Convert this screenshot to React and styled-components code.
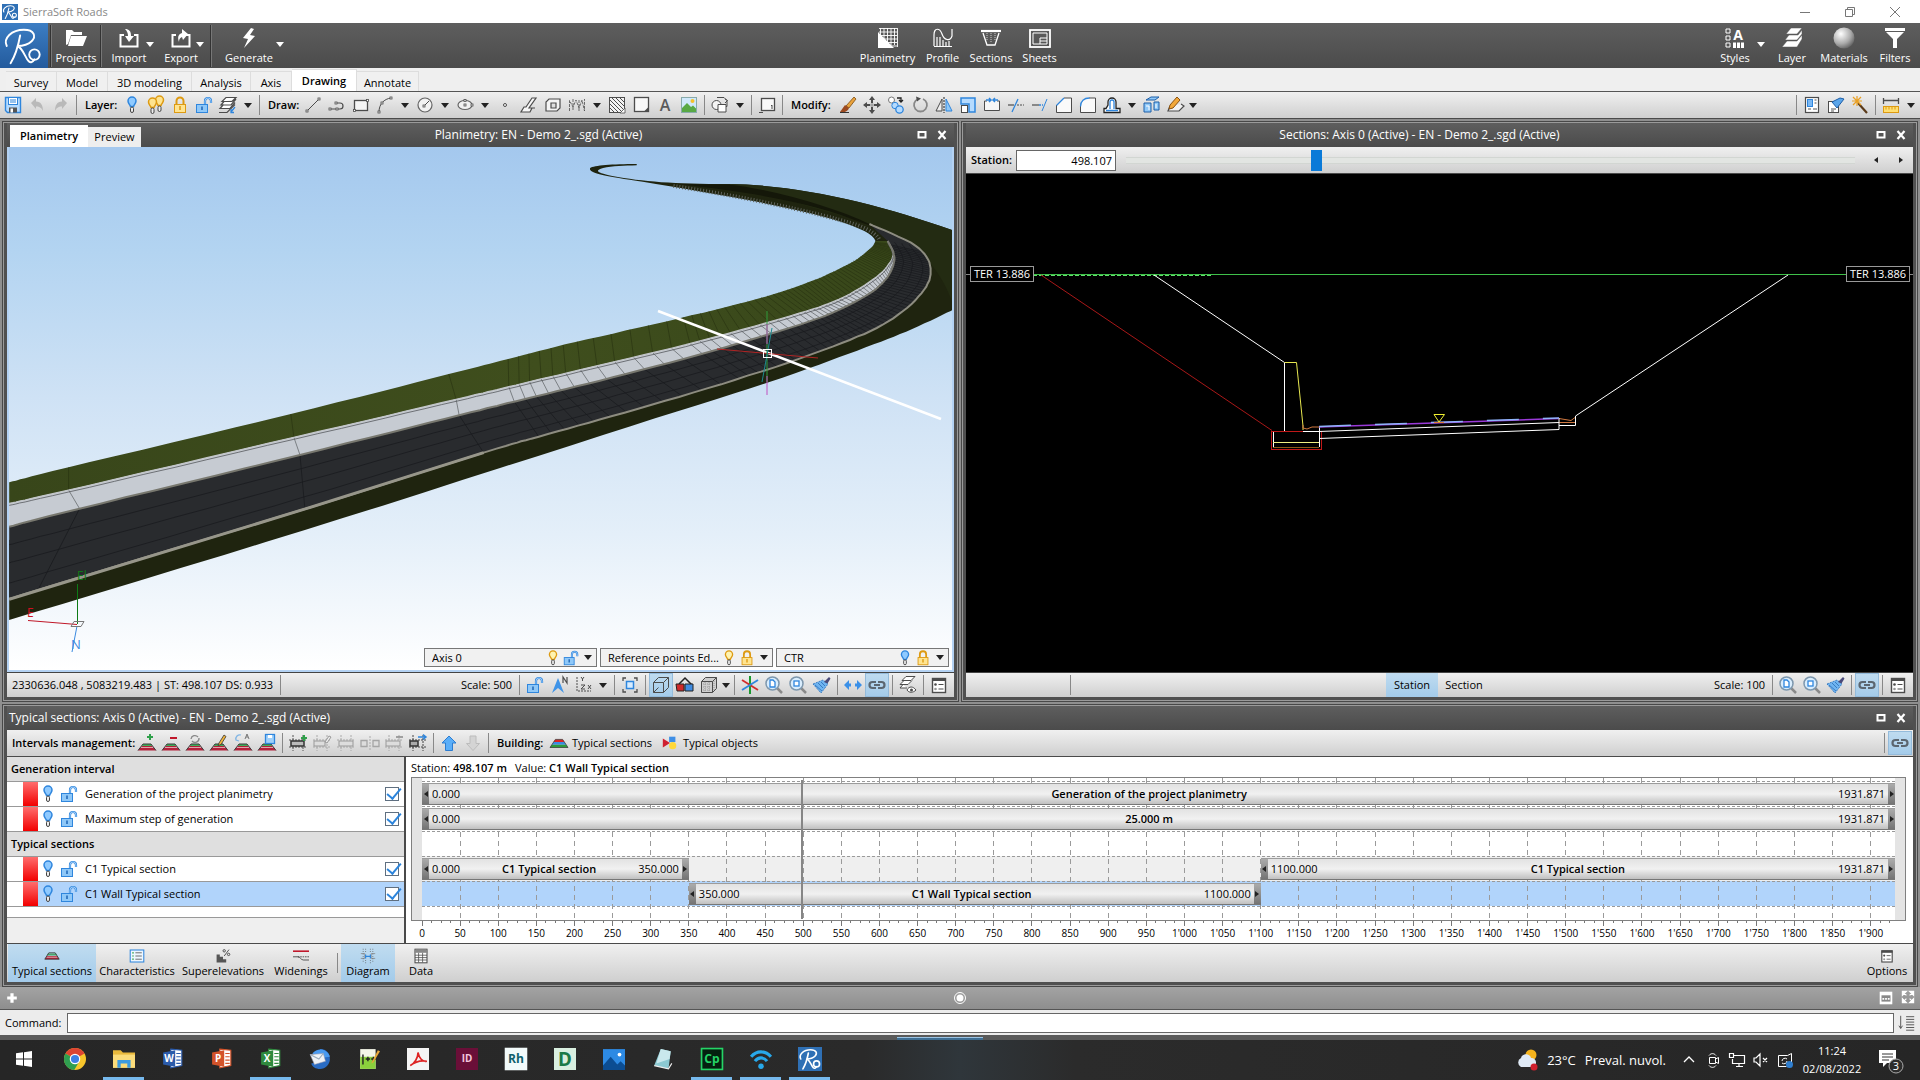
import React, { useState } from 'react';
import styled, { createGlobalStyle, css } from 'styled-components';

const GlobalStyle = createGlobalStyle`
  * {
    box-sizing: border-box;
  }

  body {
    margin: 0;
    background: #8f8f8f;
    color: #000;
    font-family: 'Open Sans', 'Noto Sans', sans-serif;
    font-size: 11px;
    line-height: 16px;
  }

  b {
    font-weight: 600;
  }

  button, input, select {
    font: inherit;
    color: inherit;
    border-radius: 0;
  }

  button {
    padding: 0;
    border: 0;
    background: none;
    cursor: pointer;
  }
`;

const bar = 'linear-gradient(#f0f0f0, #cfcfcf)';
const darkBar = 'linear-gradient(#5e5e5e, #4b4b4b)';
const activeBlue = 'linear-gradient(#c0dcf0, #a3cbea)';

/* ---------- icons ---------- */

const G = '#4c4c4c';
const B = '#2f86dd';
const LB = '#b5dbff';
const Y = '#dd9a12';
const LY = '#ffe48f';

const bulb = (c, f) => (
  <>
    <path d="M10 2a4 4 0 0 0-4 4c0 2.500 2 3.500 2.500 5.500h3c.5-2 2.500-3 2.500-5.500a4 4 0 0 0-4-4z" fill={f} stroke={c} strokeWidth="1.500" />
    <rect x="8.500" y="12" width="3" height="5.500" rx="1.500" fill="#eee" stroke="#444" />
  </>
);

const lock = (
  <>
    <path d="M6.500 10V6a3.500 3.500 0 0 1 7 0v4" fill="none" stroke={Y} strokeWidth="2" />
    <rect x="4.500" y="9.500" width="11" height="8" fill={LY} stroke={Y} />
    <path d="M10 11v4" stroke={Y} strokeWidth="1.500" />
  </>
);

const unlock = (
  <>
    <path d="M11 10V6a3 3 0 0 1 6 0v2" fill="none" stroke={B} strokeWidth="2.200" />
    <path d="M11 10V6a3 3 0 0 1 6 0v2" fill="none" stroke={LB} strokeWidth=".8" />
    <rect x="2.500" y="9.500" width="11" height="8" fill="#8fc8f8" stroke={B} />
    <path d="M8 11.500v3.500" stroke="#1c64b4" strokeWidth="1.500" />
  </>
);

const hill = (
  <>
    <path d="M6 11h8l1 2H5z" fill="#3fae5a" />
    <path d="M5 13h10l4 4.500H1z" fill="#b3203a" />
    <path d="M4 14.500h12" stroke="#e8c8c8" strokeWidth=".8" />
    <path d="M1 17.500l5-6.500h8l5 6.500" fill="none" stroke="#3a3a3a" />
  </>
);

const lanes = (c) => (
  <path d="M1 7h18M1 14h18M5 2v16M15 2v16" fill="none" stroke={c} strokeDasharray="2 1" />
);

const lens = (inner) => (
  <>
    <path d="M12.500 12.500l5.500 5.500" stroke="#8a8a8a" strokeWidth="2.500" />
    <circle cx="8.500" cy="8.500" r="6.500" fill="#d9edfd" stroke="#7d97ad" strokeWidth="1.500" />
    {inner}
  </>
);

const handle = (x, y) => <rect x={x - 1} y={y - 1} width="2" height="2" fill="#fff" stroke={G} strokeWidth=".8" />;

const ICONS = {
  save: (
    <>
      <path d="M2.500 2.500h15v15h-13l-2-2z" fill={LB} stroke={B} strokeWidth="1.400" />
      <rect x="5.500" y="2.500" width="9" height="7" fill="#fff" stroke={B} />
      <path d="M7 5h6M7 7h6" stroke={B} />
      <rect x="6" y="12.500" width="8" height="5" fill="#555" />
      <rect x="7.500" y="13.500" width="2.500" height="4" fill="#fff" />
    </>
  ),
  undo: <path d="M4 8l5-5v3.500c5 0 7 4 7 9.500-1.500-3-3-4.500-7-4.500V14z" fill="#b9b9b9" />,
  redo: <path d="M16 8l-5-5v3.500c-5 0-7 4-7 9.500 1.500-3 3-4.500 7-4.500V14z" fill="#b9b9b9" />,
  bulb: bulb(B, '#8fcaff'),
  bulbOn: bulb(Y, '#fff3b0'),
  bulbs: (
    <>
      <g transform="translate(3.500 -1)">{bulb(Y, LY)}</g>
      <g transform="translate(-3.500 1)">{bulb(Y, LY)}</g>
    </>
  ),
  lock,
  unlock,
  layers: (
    <>
      <path d="M8 2.500h10l-4 4H4zM6 6.500l-3 3.500h10l5-6M5.500 9.500L2 13.500h10l5-6" fill="#fff" stroke={G} strokeWidth="1.200" />
      <path d="M1 17.500h8l8-8" fill="none" stroke={G} strokeWidth="1.200" />
      <path d="M17 12l-4 5m0-3v3.500h3" fill="none" stroke={B} strokeWidth="1.300" />
    </>
  ),
  line: <><path d="M4 16L16 4" stroke={G} />{handle(4, 16)}{handle(16, 4)}</>,
  polyline: <><path d="M3 14h10c4 0 4-6 0-6H9" fill="none" stroke={G} strokeWidth="1.200" />{handle(3, 14)}{handle(10, 14)}{handle(9, 8)}</>,
  rect: <><rect x="3.500" y="5.500" width="13" height="10" fill="#f4f4f4" stroke={G} strokeWidth="1.300" />{handle(3.5, 15.5)}{handle(16.5, 5.5)}</>,
  arc: <><path d="M4 17C4 9 9 4 16 3" fill="none" stroke={G} />{handle(4, 17)}{handle(7, 8)}{handle(16, 3)}</>,
  circle: <><circle cx="10" cy="10" r="7" fill="#f2f2f2" stroke="#666" strokeWidth="1.200" /><path d="M9 11l5-5" stroke={G} />{handle(9, 11)}</>,
  ellipse: <><ellipse cx="10" cy="10" rx="7" ry="4.500" fill="#f2f2f2" stroke="#666" strokeWidth="1.200" />{handle(10, 10)}{handle(10, 5.5)}{handle(17, 10)}</>,
  point: <circle cx="10" cy="10" r="1.500" fill="#fff" stroke={G} />,
  path3d: <path d="M2 17h9l2-4h-3l7-10h-4L7 12H5zM13 13h3" fill="#f7f7f7" stroke={G} strokeWidth="1.200" />,
  region: <path d="M3 16V7l3-3h11v9l-3 3zM8 13V8h5v5z" fill="#f4f4f4" fillRule="evenodd" stroke={G} strokeWidth="1.200" />,
  spline: <path d="M2.500 16V5.500L6 12l3-7 3 8 3-8 2.500 11V4M6 4v12M12 5v11" fill="none" stroke={G} strokeWidth=".8" strokeDasharray="3 1" />,
  hatch: (
    <>
      <rect x="2.500" y="2.500" width="15" height="15" fill="#f2f2f2" stroke={G} />
      <path d="M3 5l12 12M3 9l8 8M3 13l4 4M5 3l12 12M9 3l8 8M13 3l4 4" stroke={G} />
      <path d="M13 18h5v-5z" fill="#fff" stroke={G} strokeWidth=".8" />
    </>
  ),
  boundary: <><rect x="3.500" y="2.500" width="14" height="14" fill="#f8f8f8" stroke={G} strokeWidth="1.300" /><path d="M13 16.500h4.500V12z" fill={G} /></>,
  letter: <text x="10" y="16" textAnchor="middle" fontSize="16" fontWeight="600" fill="#5a5a5a">A</text>,
  picture: (
    <>
      <rect x="2.500" y="2.500" width="15" height="15" fill="#cfe8fb" stroke="#8aa" />
      <path d="M3 17v-4l5-5 4 4 2-1.500 3 3V17z" fill="#58a945" />
      <circle cx="13.500" cy="6" r="2" fill="#f5c22c" />
    </>
  ),
  shapes: (
    <>
      <path d="M7 2.500h7l3 3v6h-3" fill="none" stroke={G} />
      <circle cx="6.500" cy="10" r="4.500" fill="#f4f4f4" stroke={G} />
      <path d="M8 9.500h8v7.500H8z" fill="#fff" stroke={G} />
      <path d="M15 4l2.500 1.500L15 8" fill="none" stroke={G} />
    </>
  ),
  paper: <><rect x="4.500" y="3.500" width="13" height="12" fill="#f8f8f8" stroke={G} strokeWidth="1.300" /><path d="M2 17.500h4M14 11l1-1v4" fill="none" stroke={G} /></>,
  brush: <><path d="M16 2l2 2-7 9-3-2z" fill="#e9a23b" stroke="#7a4a12" strokeWidth=".8" /><path d="M2 17l5-7 4 3c-1 3-4 5-9 4z" fill="#9b4a20" /><path d="M2 17.500h9" stroke="#333" /></>,
  move: <><path d="M10 1l3 4h-2v3H9V5H7zM10 19l-3-4h2v-3h2v3h2zM1 10l4-3v2h3v2H5v2zM19 10l-4 3v-2h-3V9h3V7z" fill={G} /><rect x="9" y="9" width="2" height="2" fill="#fff" stroke={G} strokeWidth=".6" /></>,
  copy: (
    <>
      <circle cx="5.500" cy="5" r="3" fill="#fff" stroke="#777" />
      <circle cx="9" cy="10.500" r="3.200" fill={LB} stroke={B} />
      <circle cx="13.500" cy="14.500" r="3.700" fill={LB} stroke={B} strokeWidth="1.300" />
      <path d="M11 3h4v4m-2-2l2 2 2-2" fill="none" stroke="#222" strokeWidth="1.300" />
    </>
  ),
  rotate: <><path d="M8 4a6.500 6.500 0 1 0 5 0" fill="none" stroke="#888" strokeWidth="1.800" /><path d="M6 1.500l5 2-4 3z" fill={G} /></>,
  mirror: <><path d="M8 4v12H2z" fill="#eee" stroke={G} /><path d="M12 4v12h6z" fill="#8fc8f8" stroke={B} /><path d="M10 2v16" stroke="#222" strokeDasharray="2 1" /></>,
  scale: <><path d="M3 3h14v14h-6V9H3z" fill={LB} stroke={B} strokeWidth="1.500" /><rect x="3.500" y="10.500" width="6" height="7" fill="#fff" stroke={G} /></>,
  stretch: <><path d="M5 6H2.500v9.500h15V6H15" fill="#f6f6f6" stroke={G} /><path d="M4 5h5M11 5h5M7 3l2 2-2 2M13 3l-2 2 2 2" fill="none" stroke={B} strokeWidth="1.500" /></>,
  trim: <><path d="M2 10h6" stroke={G} strokeWidth="1.200" /><path d="M6 17L12 4" stroke={B} strokeWidth="1.300" /><path d="M11 10h7" stroke={G} strokeDasharray="2 1" /></>,
  extend: <><path d="M2 10h7" stroke={G} strokeWidth="1.200" /><path d="M9 10h4" stroke={B} strokeDasharray="2 1" strokeWidth="1.300" /><path d="M12 16l5-12" stroke={B} /></>,
  chamfer: <><path d="M3 10l7-7h7v14H3z" fill="#fafafa" /><path d="M10 3h7.500v14.500H2.500V10" fill="none" stroke={G} /><path d="M2.500 10.500L10 3" stroke={B} strokeWidth="1.300" /></>,
  fillet: <><path d="M3 11c0-5 3-8 8-8h6v14H3z" fill="#fafafa" /><path d="M11 3h6.500v14.500H2.500V11" fill="none" stroke={G} /><path d="M2.500 11.500C2.500 6 6 3 11.500 3" fill="none" stroke={B} strokeWidth="1.300" /></>,
  offset: <><path d="M2 17.500h16v-4h-4V7a4 4 0 0 0-8 0v3L4 13.500H2z" fill="#fff" stroke="#222" strokeWidth="1.300" /><path d="M4 15.500h12M8 14V7a2 2 0 0 1 4 0v7" fill="none" stroke={B} strokeWidth="1.300" /></>,
  explode: <><path d="M2 8h7v9H2zM12 7h5v8h-5zM4 5l5-3h8l-4 3z" fill="#8fc8f8" stroke="#1d5ea8" /><path d="M4 11h3v4M14 9v4" fill="none" stroke="#fff" /></>,
  editShape: <><path d="M4 11l-2 5h11l5-5-3-2" fill="#f2f2f2" stroke={G} strokeWidth="1.200" /><path d="M4 10l7-8 3 3-7 8-4 1z" fill="#f2a83a" stroke="#8a5210" /></>,
  propA: <><rect x="3.500" y="2.500" width="13" height="15" fill="#fff" stroke={G} strokeWidth="1.200" /><rect x="5.500" y="4.500" width="5" height="7" fill="#7ab8f4" stroke={B} /><path d="M12.500 5h2M12.500 8h2M6 14h3M11 14h4" stroke="#555" /></>,
  propB: <><rect x="2.500" y="6.500" width="10" height="11" fill="#fff" stroke={G} /><path d="M5 14h5M5 16h3" stroke="#555" /><path d="M6 7l8-4 4 1-7 9z" fill="#5aa5ea" stroke="#1d5ea8" /></>,
  wand: <><path d="M8 8l9 10" stroke="#5a3a1a" strokeWidth="2.200" /><path d="M7 1v10M2 6h10M3 2l8 8M11 2l-8 8" stroke="#eaa022" strokeWidth="1.200" /></>,
  ruler: <><path d="M2.500 3v6M17.500 3v6M2.500 5.500h15" stroke={G} strokeWidth="1.300" /><rect x="2.500" y="11.500" width="15" height="6" fill="#ffdf70" stroke={Y} /><path d="M5 12v2.500M8 12v2.500M11 12v2.500M14 12v2.500" stroke={Y} /></>,
  north: <><path d="M3 18L9 3l6 15-6-5z" fill="#3f94e8" /><path d="M14 8V2l4 6V2" fill="none" stroke={G} strokeWidth="1.200" /></>,
  axes: <><path d="M4 2v14h14" fill="none" stroke={G} strokeDasharray="2 1" /><path d="M8 2l1.500 2L11 2M9.500 4v2M8 10h4l-4 4h4M15 10l3 4M18 10l-3 4" fill="none" stroke={G} /></>,
  fit: <><rect x="6.500" y="6.500" width="7" height="7" fill="#d7ecff" stroke={B} strokeWidth="1.500" /><path d="M3 6V3h3M14 3h3v3M17 14v3h-3M6 17H3v-3" fill="none" stroke={G} strokeWidth="1.300" /></>,
  wire: <path d="M2.500 7.500h10v10h-10zM2.500 7.500l5-5h10l-5 5M17.500 2.500v10l-5 5M2.500 17.500l5-5" fill="none" stroke={G} />,
  glasses: <><path d="M4 9l6-6 7 7" fill="none" stroke="#222" strokeWidth="1.500" /><path d="M1 9h8v7H2z" fill="#cf2a2a" stroke="#222" /><path d="M10 9h8v7h-8z" fill="#3f8be0" stroke="#222" /></>,
  cube: <><path d="M2.500 6.500l4-4h11v11l-4 4h-11z" fill="#cfcfcf" stroke={G} /><path d="M2.500 6.500h11v11M13.500 6.500l4-4" fill="none" stroke={G} /><path d="M4 9h8M4 12h8M4 15h8M6 7v10M10 7v10M15 6v9" stroke="#999" strokeDasharray="1 1" /></>,
  star: <><path d="M10 1v18" stroke="#1c9a30" strokeWidth="2" /><path d="M2 5l16 10" stroke="#d12c2c" strokeWidth="1.800" /><path d="M2 15L18 5" stroke={B} strokeWidth="1.800" /></>,
  zoomPage: lens(<path d="M6 5h3l2 2v5H6z" fill="#fff" stroke={B} strokeWidth="1.300" />),
  zoomBox: lens(<rect x="6" y="6" width="5" height="5" fill="#fff" stroke={B} strokeWidth="1.300" />),
  sweep: <><path d="M1 9l10-4 5 4-7 9z" fill="#6fb4f0" stroke="#2a6db8" strokeWidth=".8" strokeDasharray="2 1" /><path d="M3 10l7 6M6 8l5 5M9 7l4 4" stroke="#2a6db8" strokeWidth=".8" /><path d="M12 7l5-5 1.500 1.500-3 5z" fill="#4a4a7a" /></>,
  swap: <path d="M1 10l5-5v3.500h2v3H6V15zM19 10l-5-5v3.500h-2v3h2V15z" fill="#3a90e8" />,
  link: (
    <path d="M9 13H5.500a3 3 0 0 1 0-6H9M11 7h3.500a3 3 0 0 1 0 6H11M7 10h6" fill="none" stroke="#5c6670" strokeWidth="2.200" />
  ),
  layersEye: <><path d="M8 1.500h9l-4 4H4zM6 5.500l-4 4h8l4-4M5 9.500l-3 3.500h7" fill="#fff" stroke={G} /><path d="M9 15c2-4 6-4 9 0-3 3-7 3-9 0z" fill="#fff" stroke={G} /><circle cx="13.500" cy="15" r="1.500" fill={G} /></>,
  options: <><rect x="3.500" y="3.500" width="13" height="14" fill="#fff" stroke={G} strokeWidth="1.400" /><path d="M3 4.500h14" stroke={G} strokeWidth="3" /><circle cx="6.500" cy="9.500" r="1.300" fill={G} /><circle cx="6.500" cy="14" r="1.300" fill="#999" /><path d="M9.500 9.500h5M9.500 14h5" stroke={G} /></>,
  hillAdd: <>{hill}<path d="M13 1v6M10 4h6" stroke="#2fa04a" strokeWidth="2" /></>,
  hillDel: <>{hill}<path d="M9 5h7" stroke="#c0182c" strokeWidth="2" /></>,
  hillSync: <>{hill}<path d="M6 6a4 4 0 0 1 7-2M14 5a4 4 0 0 1-7 3" fill="none" stroke="#888" strokeWidth="1.300" /></>,
  hillEdit: <>{hill}<path d="M10 10l5-8 2 1.500-5 8-3 1z" fill="#f2b53a" stroke="#333" strokeWidth=".8" /></>,
  hillAuto: <>{hill}<path d="M8 2a4 4 0 0 0-5 5l3 1" fill="none" stroke="#7fb4e4" strokeWidth="1.300" /><path d="M12 6l2-5 2 5M13 4h2" fill="none" stroke="#777" /></>,
  hillSave: <>{hill}<rect x="8.500" y="1.500" width="9" height="9" fill="#9fd0fa" stroke={B} strokeWidth="1.300" /><rect x="11" y="2" width="4" height="3" fill="#fff" /></>,
  laneAdd: <>{lanes('#555')}<rect x="3" y="8" width="13" height="5" fill="#bbb" stroke="#333" strokeWidth="1.500" /><path d="M16 2v6M13 5h6" stroke="#2fa04a" strokeWidth="2" /></>,
  laneEdit: <>{lanes('#aaa')}<rect x="2" y="8" width="11" height="5" fill="#ddd" stroke="#999" /><path d="M13 9l4-6 2 1-4 6z" fill="#eee" stroke="#999" /></>,
  lane: <>{lanes('#aaa')}<rect x="3" y="8" width="14" height="5" fill="#ddd" stroke="#999" /></>,
  laneSplit: <><path d="M1 7.500h6v6H1zM13 7.500h6v6h-6z" fill="#ddd" stroke="#a5a5a5" strokeWidth="1.300" /><path d="M10 3v14" stroke="#aaa" strokeDasharray="2 1" /></>,
  laneDel: <>{lanes('#aaa')}<rect x="2" y="8" width="14" height="5" fill="#ddd" stroke="#999" /><path d="M12 4h7" stroke="#888" strokeWidth="1.500" /></>,
  laneMove: <>{lanes('#444')}<rect x="2" y="8" width="8" height="5" fill="#aaa" stroke="#333" strokeWidth="1.500" /><path d="M10 4h8m-3-2.500L18 4l-3 2.500" fill="none" stroke={B} strokeWidth="1.500" /></>,
  up: <path d="M10 3l7 7h-3.500v7.500h-7V10H3z" fill="#5aaef8" stroke="#2c7cd0" />,
  down: <path d="M10 17.500l6.500-7H13V3H7v7.500H3.500z" fill="#d4d4d4" stroke="#bcbcbc" />,
  building: <><path d="M6 6h8l2 3H4z" fill="#d22" /><path d="M4 9h12l2 3H2z" fill="#3a8be0" /><path d="M2 12h16l2 3H0z" fill="#2c9a3c" /><path d="M0 15L6 6h8l6 9z" fill="none" stroke="#333" strokeWidth=".8" /></>,
  objects: <><path d="M2 5l8 5-8 5z" fill="#cf2030" /><rect x="9" y="3" width="7" height="6" fill="#3f8fe6" /><circle cx="13" cy="13" r="4" fill="#ffd83a" /></>,
  section: <><path d="M5 7h10l1.500 2.500h-13z" fill="#4aa86a" /><path d="M3.500 10h13L19 14H1z" fill="#b3203a" /><path d="M3 11.500h14" stroke="#eecccc" /><path d="M1 14L6 6h8l5 8z" fill="none" stroke="#333" /></>,
  list: <><rect x="1.500" y="2.500" width="17" height="15" fill="#eef7ff" stroke={B} strokeWidth="1.300" /><path d="M4 6h2M4 10h2M4 14h2" stroke="#2fa04a" strokeWidth="1.500" /><path d="M8 6h8M8 10h8M8 14h8" stroke={G} /></>,
  percent: <><path d="M2 8h4v3h4v3h4v4H2z" fill="#555" /><circle cx="11.500" cy="3.500" r="1.500" fill="none" stroke="#333" /><circle cx="17" cy="8" r="1.500" fill="none" stroke="#333" /><path d="M17.500 2l-6 8" stroke="#333" /></>,
  widening: <><path d="M0 4h20" stroke="#c0182c" strokeWidth="2" /><path d="M0 11h6c3 0 4 4 7 4h7" fill="none" stroke="#333" /><path d="M6 11h14" stroke="#333" strokeDasharray="2 1" /></>,
  diagram: <><path d="M1 7h5v6H1M19 7h-5v6h5" fill="none" stroke="#888" /><path d="M7 13V8M13 8v5M7 10.500h6" fill="none" stroke={B} strokeWidth="1.500" /><path d="M4 1v18M16 1v18M7 1v4M13 1v4M7 15v4M13 15v4" stroke="#555" strokeDasharray="1 2" /></>,
  table: <><rect x="2.500" y="1.500" width="15" height="17" fill="#fff" stroke={G} strokeWidth="1.300" /><path d="M2 4h16" stroke="#888" strokeWidth="4" /><path d="M2.500 9h15M2.500 12h15M2.500 15h15M7 6v12M12 6v12" stroke={G} /></>,
  history: <path d="M3 2v14m-2-3l2 3 2-3M9 3h9M9 6h9M9 9h9M9 12h9M9 15h9M9 18h9" fill="none" stroke={G} />,
  plus: <path d="M10 4v12M4 10h12" stroke="#fff" strokeWidth="4" />,
  record: <><circle cx="10" cy="10" r="5.500" fill="none" stroke="#fff" /><circle cx="10" cy="10" r="3.500" fill="#fff" /></>,
  console: <><rect x="3" y="3" width="14" height="14" fill="#fff" /><rect x="5" y="7" width="10" height="7" fill="#888" /><path d="M6 11h8" stroke="#fff" strokeWidth="2" strokeDasharray="2 1" /></>,
  expand: <path d="M3 3h5L3 8zM17 3v5l-5-5zM3 17v-5l5 5zM17 17h-5l5-5zM4 4l4 4M16 4l-4 4M4 16l4-4M16 16l-4-4" fill="#fff" stroke="#fff" strokeWidth="1.500" />,
  maximize: <rect x="6.500" y="7" width="7" height="5.500" fill="none" stroke="#fff" strokeWidth="2" />,
  close: <path d="M6.500 6l7 8M13.500 6l-7 8" stroke="#fff" strokeWidth="2.200" />,
  // ribbon
  folder: <path d="M0 17V2h6l2 2h8v3H5L2 16zM5 8h16l-4 10H2z" fill="#fff" />,
  import: <><path d="M5 7H1.500v11.500h17V7H15" fill="none" stroke="#fff" strokeWidth="2" /><path d="M6 1c4 0 6 2 6 7h3l-5 6-4-6h3c0-3-1-5-3-7z" fill="#fff" /></>,
  export: <><path d="M5 7H1.500v11.500h17V7H15" fill="none" stroke="#fff" strokeWidth="2" /><path d="M8 14c-2-6 0-8 3-9V1l6 5-5 6-1-3c-2 1-3 2-3 5z" fill="#fff" /></>,
  bolt: <path d="M12 0L4 10l5 1-4 9 11-12-5-1 4-6z" fill="#fff" />,
  plan: <><path d="M2.500 0v17M6 0v17M9.500 0v17M13 0v17M16.500 0v17M19.500 0v19M1 .5h18M1 4h18M1 7.500h18M1 11h18M1 14.500h18M1 18h18" stroke="#fff" strokeWidth=".9" /><path d="M0 4l16 16H0z" fill="#fff" /></>,
  profile: <path d="M1 18V7c0-8 6-7 8-1s8 8 10 2V1M4 18V9M7 18v-9M10 18v-6M13 18v-4M16 18v-5M1 18.500h18" fill="none" stroke="#fff" strokeWidth="1.200" />,
  sections: <><path d="M0 3h20" stroke="#fff" strokeWidth="2.200" /><path d="M2 5l4 12h8l4-12" fill="none" stroke="#fff" strokeWidth="1.300" /><path d="M6 5v8M10 5v10M14 5v8" stroke="#fff" strokeWidth=".7" strokeDasharray="1 1" /></>,
  sheets: <><rect x="0" y="2" width="20" height="17" fill="none" stroke="#fff" strokeWidth="1.800" /><path d="M3 5h14v11H3zM10 10h7M10 13h7M10 10v6" fill="none" stroke="#fff" /></>,
  styles: <><path d="M1 1h4v4H1zM1 8h4v4H1zM1 15h4v4H1z" fill="none" stroke="#fff" /><text x="13" y="12" textAnchor="middle" fontSize="14" fontWeight="700" fill="#fff">A</text><path d="M8 14.500h3V20H8zM12 14.500h3V20h-3zM16 14.500h3V20h-3z" fill="#fff" /></>,
  stack: <path d="M9 0h11l-5 6H4zM7 7h9l4-5v4l-5 6H3zM5 13h10l5-6v4l-5 8H0z" fill="#fff" stroke="#555" strokeWidth=".5" />,
  sphere: (
    <>
      <defs>
        <radialGradient id="sphere" cx=".35" cy=".3" r=".8">
          <stop offset="0" stopColor="#fff" />
          <stop offset=".6" stopColor="#aaa" />
          <stop offset="1" stopColor="#555" />
        </radialGradient>
      </defs>
      <circle cx="10" cy="10" r="10.500" fill="url(#sphere)" />
    </>
  ),
  filter: <><path d="M0 0h20v3H0z" fill="#fff" /><path d="M1 4h18l-7 7v9H8v-9z" fill="#fff" /></>,
};

const Svg = styled.svg`
  display: block;
  flex: none;
  width: ${(p) => p.$size}px;
  height: ${(p) => p.$size}px;
  overflow: visible;
`;

const Icon = ({ name, size = 20 }) => (
  <Svg $size={size} viewBox="0 0 20 20" aria-hidden="true">{ICONS[name]}</Svg>
);

const Triangle = styled.span`
  display: block;
  border: 4px solid transparent;
  border-top: 5px solid ${(p) => p.$color || '#222'};
  border-bottom: 0;
`;

/* ---------- shell ---------- */

const Page = styled.div`
  display: flex;
  flex-direction: column;
  min-height: 100vh;
`;

const TitleBar = styled.header`
  display: flex;
  align-items: center;
  height: 23px;
  padding: 0 3px 0 2px;
  gap: 5px;
  background: #fff;
  color: #888;
`;

const WindowButtons = styled.div`
  display: flex;
  margin-left: auto;
`;

const WindowButton = styled.button`
  display: grid;
  place-items: center;
  width: 45px;
  height: 21px;
`;

const Ribbon = styled.nav`
  display: grid;
  grid-template-columns: 1fr auto 1fr;
  height: 45px;
  background: ${darkBar};
  color: #fff;
`;

const RibbonGroup = styled.div`
  display: flex;
  justify-content: ${(p) => p.$justify || 'flex-start'};
  padding-right: ${(p) => (p.$justify ? 3 : 0)}px;
`;

const LogoTile = styled.div`
  flex: none;
  width: 48px;
  padding: 2px;
  background: linear-gradient(#3c7ec4, #235a9c);
`;

const RibbonButton = styled.button`
  display: flex;
  flex-direction: column;
  align-items: center;
  gap: 3px;
  width: ${(p) => p.$w}px;
  padding-top: 5px;
  line-height: 14px;
`;

const RibbonCaret = styled.button`
  width: 8px;
  height: 43px;
  margin: 0 4px 0 -8px;
`;

const RibbonLine = styled.span`
  width: 2px;
  margin: 2px;
  border-left: 1px solid #333;
  border-right: 1px solid #777;
`;

const TabBar = styled.div`
  display: flex;
  align-items: flex-end;
  height: 24px;
  padding-left: 6px;
  background: #efefef;
  border-bottom: 1px solid #555;
`;

const Tab = styled.button`
  width: ${(p) => p.$w}px;
  height: 20px;
  padding-top: 2px;
  border: 1px solid #ddd;
  border-width: 1px 1px 0 0;
  background: #f0f0f0;
  ${(p) => p.$active && css`
    height: 22px;
    padding-top: 0;
    background: #fff;
    font-weight: 600;
  `}
`;

const Toolbar = styled.div`
  display: flex;
  align-items: center;
  height: 27px;
  padding: 0 ${(p) => p.$end || 1}px 0 ${(p) => p.$start || 0}px;
  background: ${bar};
  border-bottom: 1px solid #4a4a4a;
`;

const ToolButton = styled.button`
  display: grid;
  place-items: center;
  flex: none;
  width: 24px;
  height: 24px;
  background: ${(p) => (p.$active ? activeBlue : 'none')};
  box-shadow: ${(p) => (p.$active ? 'inset 0 0 0 1px #94bbdb' : 'none')};
`;

const CaretButton = styled.button`
  display: grid;
  place-items: center;
  width: ${(p) => (p.$narrow ? 10 : 16)}px;
  height: 24px;
`;

const Line = styled.span`
  flex: none;
  width: 1px;
  height: 20px;
  margin: 0 3px;
  background: #888;
`;

const ToolLabel = styled.span`
  width: ${(p) => p.$w}px;
  padding-left: 5px;
  font-weight: 600;
  white-space: nowrap;
`;

const TextButton = styled.button`
  display: flex;
  align-items: center;
  gap: 4px;
  margin-right: 9px;
`;

const Spacer = styled.span`
  flex: 1;
`;

const Tools = ({ items }) =>
  items.map((item, i) => {
    if (item === '|') return <Line key={i} />;
    if (item === 'v') return <CaretButton key={i} aria-label="More"><Triangle /></CaretButton>;
    if (item === 'vv') return <CaretButton key={i} $narrow aria-label="More"><Triangle /></CaretButton>;
    const active = item.startsWith('*');
    const name = active ? item.slice(1) : item;
    return <ToolButton key={i} $active={active} aria-label={name}><Icon name={name} /></ToolButton>;
  });

/* ---------- panels ---------- */

const Workspace = styled.main`
  display: flex;
  flex-direction: column;
  flex: 1;
  gap: 2px;
  padding: 2px 2px 0;
`;

const Split = styled.div`
  display: grid;
  grid-template-columns: 1fr 1fr;
  gap: 2px;
  flex: 1;
`;

const Panel = styled.section`
  display: flex;
  flex-direction: column;
  min-width: 0;
  padding: 1px 4px 4px;
  border: 1px solid #484848;
  background: #505050;
  box-shadow: inset 0 0 0 1px #9a9a9a;
`;

const PanelTitle = styled.div`
  display: grid;
  grid-template-columns: auto 1fr auto;
  align-items: center;
  height: 24px;
  background: ${darkBar};
  color: #fff;
`;

const TitleText = styled.h2`
  margin: 0;
  padding-left: 2px;
  font-size: 12px;
  font-weight: 400;
  text-align: ${(p) => (p.$left ? 'left' : 'center')};
`;

const TitleButtons = styled.div`
  display: flex;
  justify-content: flex-end;
  padding-right: 2px;
`;

const TitleButton = styled.button`
  width: 20px;
  height: 20px;
`;

const ViewTabs = styled.div`
  display: flex;
  align-items: flex-end;
  align-self: end;
  padding: 0 22px 0 3px;
  color: #000;
`;

const ViewTab = styled.button`
  width: ${(p) => p.$w}px;
  height: ${(p) => (p.$active ? 22 : 20)}px;
  background: ${(p) => (p.$active ? '#fff' : '#eee')};
  font-weight: ${(p) => (p.$active ? 600 : 400)};
`;

const StatusBar = styled(Toolbar)`
  height: 25px;
  border-top: 1px solid #444;
  border-bottom: 0;
`;

const Coordinates = styled.span`
  padding: 0 4px 0 5px;
`;

const ScaleText = styled.span`
  padding-right: 4px;
`;

const View = styled.div`
  position: relative;
  flex: 1;
  border: 2px solid #b4d2f3;
  border-top: 0;
  background: linear-gradient(#a4c8ee, #b3d4f1 20%, #cfe2f5 48%, #e4eff9 74%, #fff);
`;

const Drawing = styled.svg`
  position: absolute;
  inset: 0;
  width: 100%;
  height: 100%;
`;

const Pickers = styled.div`
  position: absolute;
  right: 3px;
  bottom: 3px;
  display: flex;
  gap: 3px;
`;

const Picker = styled.div`
  display: flex;
  align-items: center;
  width: 173px;
  height: 19px;
  border: 1px solid #777;
  background: #f1f1f1;
`;

const PickerSelect = styled.select`
  flex: 1;
  min-width: 0;
  height: 17px;
  padding: 0 0 0 7px;
  border: 0;
  background: none;
  appearance: none;
`;

const StationBar = styled(Toolbar)`
  gap: 6px;
  padding: 0 5px 0 0;
`;

const StationInput = styled.input`
  width: 100px;
  height: 21px;
  padding: 0 3px;
  border: 1px solid #666;
  background: #fff;
  text-align: right;
`;

const Slider = styled.input`
  flex: 1;
  height: 21px;
  margin: 0 3px 0 4px;
  appearance: none;
  background: linear-gradient(transparent 7px, #d2d6d2 7px 8px, #e2e5e2 8px 13px, #d2d6d2 13px 14px, transparent 14px);

  &::-webkit-slider-thumb {
    appearance: none;
    width: 11px;
    height: 21px;
    background: #0a7ad8;
  }
`;

const StepButton = styled.button`
  width: 14px;
  margin-left: 5px;
  font-size: 9px;
`;

const StepIcon = styled.span`
  display: inline-block;
  border: 3px solid transparent;
  border-${(p) => p.$side}: 4px solid #222;
  border-${(p) => (p.$side === 'left' ? 'right' : 'left')}: 0;
`;

const SectionView = styled.div`
  position: relative;
  flex: 1;
  background: #000;
`;

const SectionStatus = styled(StatusBar)`
  display: grid;
  grid-template-columns: 1fr auto 1fr;
`;

const StatusGroup = styled.div`
  display: flex;
  align-items: center;
  justify-content: ${(p) => (p.$end ? 'flex-end' : 'flex-start')};
  padding-left: ${(p) => (p.$end ? 0 : 101)}px;
`;

const ModeButton = styled.button`
  width: 52px;
  height: 24px;
  background: ${(p) => (p.$active ? activeBlue : 'none')};
`;

/* ---------- planimetry drawing ---------- */

// stations along the road, from the viewer to the bend
const SLOPE = [[15, 1027], [112, 982], [475, 822], [733, 702], [830, 657], [940, 606], [1110, 535], [1250, 470], [1330, 420], [1390, 368], [1422, 325], [1430, 303]];
const WALL_TOP = [[15, 1090], [112, 1050], [480, 892], [745, 778], [831, 740], [945, 690], [1120, 614], [1290, 528], [1370, 478], [1432, 410], [1458, 350], [1450, 303]];
const WALL_BASE = [[15, 1160], [130, 1106], [490, 945], [750, 826], [840, 785], [960, 731], [1140, 645], [1308, 553], [1388, 494], [1441, 430], [1461, 360], [1450, 303]];
const CURB = [[15, 1377], [62, 1350], [498, 1107], [790, 938], [880, 890], [1020, 818], [1200, 720], [1360, 620], [1450, 545], [1505, 460], [1520, 385], [1495, 317], [1420, 252]];
const VERGE = [[15, 1440], [498, 1170], [985, 885], [1253, 728], [1400, 632], [1490, 567], [1558, 508]];

const spline = (pts, s) => {
  const i = Math.min(Math.floor(s), pts.length - 2);
  const t = s - i;
  const [a, b, c, d] = [pts[Math.max(i - 1, 0)], pts[i], pts[i + 1], pts[Math.min(i + 2, pts.length - 1)]];
  return [0, 1].map((k) =>
    0.5 * (2 * b[k] + (c[k] - a[k]) * t + (2 * a[k] - 5 * b[k] + 4 * c[k] - d[k]) * t * t + (3 * b[k] - a[k] - 3 * c[k] + d[k]) * t * t * t)
  );
};

const trace = (pts) => {
  const out = [];
  for (let n = 0; n <= (pts.length - 1) * 8; n++) out.push(spline(pts, n / 8));
  return out;
};

const toPath = (pts) => 'M' + pts.map((p) => p.map(Math.round).join(' ')).join('L');
const band = (a, b) => toPath([...trace(a), ...trace(b).reverse()]) + 'Z';

const seams = [1, 2, 3];
for (let s = 4; s < 10.8; s += s < 6 ? 0.17 : 0.09) seams.push(s);

const lanePts = (f) => WALL_BASE.map((p, i) => [p[0] + (CURB[i][0] - p[0]) * f, p[1] + (CURB[i][1] - p[1]) * f]);

const Stroke = styled.path`
  fill: none;
  vector-effect: non-scaling-stroke;
`;

const RoadDrawing = () => (
  <Drawing viewBox="9 147 943 523" preserveAspectRatio="none">
    <defs>
      <linearGradient id="grass" x1="0" x2="1">
        <stop offset="0" stopColor="#38461a" />
        <stop offset=".6" stopColor="#3f4e1d" />
        <stop offset="1" stopColor="#38471a" />
      </linearGradient>
    </defs>
    <g transform="translate(0 140) scale(.61224 .33333)">
      <path
        d={toPath(trace(VERGE)) + 'L1558 272C1440 195 1310 135 1190 132C1100 132 1050 125 1000 108C975 98 970 92 985 84C1000 78 1020 77 1040 76L1040 72C1000 72 970 76 964 84C960 98 985 108 1050 125C1180 165 1420 235 1430 303C1425 480 900 720 15 1200Z'}
        fill="#1f240f"
      />
      <path d="M1190 132C1310 135 1440 195 1558 272V500C1540 400 1500 290 1410 245C1330 205 1250 160 1190 132Z" fill="#232b12" />
      <path d="M1190 134C1260 145 1380 210 1430 262L1410 250C1330 190 1240 160 1110 133Z" fill="#141709" />
      <Stroke d="M1100 138C1200 165 1330 215 1400 255C1425 272 1435 290 1436 300" stroke="#5e625c" strokeWidth="4" strokeDasharray="1 2" />
      <path d={band(WALL_BASE, CURB)} fill="#292b2e" />
      <path d="M1420 252L1450 303L1495 317Z" fill="#292b2e" />
      <path d={band(SLOPE, WALL_TOP)} fill="url(#grass)" />
      <path d={band(WALL_TOP, WALL_BASE)} fill="#c6cbd2" />
      {seams.map((s) => (
        <React.Fragment key={s}>
          <Stroke d={toPath([spline(SLOPE, s), spline(WALL_TOP, s)])} stroke="#27310f" strokeWidth=".6" />
          <Stroke d={toPath([spline(WALL_TOP, s), spline(WALL_BASE, s)])} stroke="#5a5e62" strokeWidth=".7" />
          <Stroke d={toPath([spline(WALL_BASE, s), spline(CURB, s)])} stroke="#141619" strokeWidth=".6" />
        </React.Fragment>
      ))}
      {[0.25, 0.5, 0.78].map((f) => (
        <Stroke key={f} d={toPath(trace(lanePts(f)))} stroke="#191b1e" strokeWidth=".8" />
      ))}
      <Stroke d={toPath(trace(WALL_TOP))} stroke="#c2c5c8" strokeWidth="1.200" />
      <Stroke d={toPath(trace(WALL_TOP).map(([x, y]) => [x, y + 6]))} stroke="#55585c" strokeWidth=".8" />
      <Stroke d={toPath(trace(WALL_BASE))} stroke="#77776e" strokeWidth="2" />
      <Stroke d={toPath(trace(CURB))} stroke="#8d8c80" strokeWidth="2" />
      <Stroke d="M15 1378L500 1106L790 938" stroke="#97968a" strokeWidth="3" />
    </g>
    {/* cursor */}
    <path d="M658 311L941 419" stroke="#fff" strokeWidth="2.500" />
    <path d="M717 349L818 358" stroke="#b02424" />
    <path d="M767 311v71" stroke="#2f9a3a" />
    <path d="M767 324v20M767 376v19" stroke="#c050c0" />
    <path d="M772 328L762 382" stroke="#1d8a90" />
    <rect x="763.500" y="349.500" width="8" height="8" fill="none" stroke="#fff" />
    {/* compass */}
    <path d="M77.500 584v40" stroke="#0d7a16" />
    <path d="M28 620.500L77 624.500" stroke="#c01828" />
    <path d="M77 626L72 652" stroke="#3a8ae0" />
    <path d="M74 621.500h10l-3 5H71z" fill="none" stroke="#777" />
    <text x="77" y="580" fontSize="12" fill="#0d7a16">El</text>
    <text x="27" y="617" fontSize="12" fill="#d01020">E</text>
    <text x="71" y="649" fontSize="13" fill="#3a8ae0">N</text>
  </Drawing>
);

/* ---------- section drawing ---------- */

const SectionDrawing = () => (
  <Drawing viewBox="966 174 947 498" fill="none" strokeWidth="1">
    <path d="M966 274.500h4M1909 274.500h4" stroke="#888" />
    <path d="M1033 274.500h813" stroke="#3fc04a" />
    <path d="M1033 275.500h178" stroke="#5fe06a" strokeDasharray="4 2" />
    <path d="M1041 275L1272 430.500" stroke="#a81818" />
    <rect x="1271.500" y="431.500" width="50" height="18" stroke="#c01818" />
    <path d="M1154 275l130.500 87.500V431M1273.500 432v15M1319.500 427v20" stroke="#fff" />
    <path d="M1273 442.500h46" stroke="#f0f080" />
    <path d="M1273 447.500h46" stroke="#8a5a18" />
    <path d="M1284.500 362.500h12L1303 426v4" stroke="#e8e850" />
    <path d="M1303 425v3l4 1 5-2h7M1559 418.500l12 2 4-3M1559 422.500h16" stroke="#d07840" />
    <path d="M1303 431.500h16L1559 422.500M1319 438.500L1559 429.500V418M1559 425.500h16.500V416L1788 275" stroke="#fff" />
    <path d="M1319 427L1559 418.500" stroke="#9a3ad8" strokeWidth="1.500" />
    <path d="M1319 426.500L1559 418" stroke="#8fb4fa" strokeDasharray="32 24" strokeWidth="1.500" />
    <path d="M1434 414.500h10.500L1439 422z" stroke="#f0f030" />
    <path d="M1434 422.500h10" stroke="#e08040" />
    {[970, 1846].map((x) => (
      <g key={x}>
        <rect x={x + 0.5} y="266.500" width="63" height="15" fill="#000" stroke="#999" />
        <text x={x + 32} y="278" textAnchor="middle" fontSize="11" fill="#fff" stroke="none">TER 13.886</text>
      </g>
    ))}
  </Drawing>
);

/* ---------- intervals ---------- */

const LENGTH = 1931.871;
const STATION = 498.107;
const pct = (v) => `${(v / LENGTH) * 100}%`;

const GROUPS = [
  { title: 'Generation interval', rows: ['Generation of the project planimetry', 'Maximum step of generation'] },
  { title: 'Typical sections', rows: ['C1 Typical section', 'C1 Wall Typical section'] },
];

const LANES = [
  { parts: [{ from: 0, to: LENGTH, name: 'Generation of the project planimetry' }] },
  { parts: [{ from: 0, to: LENGTH, name: '25.000 m' }] },
  { parts: [] },
  {
    bg: '#efefef',
    parts: [{ from: 0, to: 350, name: 'C1 Typical section' }, { from: 1100, to: LENGTH, name: 'C1 Typical section' }],
  },
  { bg: '#b1d4fb', parts: [{ from: 350, to: 1100, name: 'C1 Wall Typical section' }] },
];

const Body = styled.div`
  display: grid;
  grid-template-columns: 399px 1fr;
  background: #fff;
`;

const List = styled.div`
  display: flex;
  flex-direction: column;
  border-right: 2px solid #4a4a4a;
`;

const GroupTitle = styled.div`
  height: 25px;
  padding: 4px 4px 0;
  background: #dfdfdf;
  border-bottom: 1px solid #999;
  font-weight: 600;
`;

const Row = styled.label`
  display: grid;
  grid-template-columns: 16px 15px 21px 21px 1fr auto;
  align-items: center;
  height: 25px;
  padding-right: 5px;
  border-bottom: 1px solid #999;
  background: ${(p) => (p.$active ? '#b1d4fb' : '#fff')};
`;

const Margin = styled.span`
  height: 24px;
  background: #fff;
`;

const Swatch = styled.span`
  height: 24px;
  background: linear-gradient(#ff6d6d, #f20000);
`;

const RowText = styled.span`
  padding-left: 5px;
`;

const Check = styled.input`
  position: relative;
  width: 14px;
  height: 14px;
  margin: 0;
  border: 1px solid #5f6f80;
  background: #fff;
  appearance: none;

  &:checked::after {
    content: '';
    position: absolute;
    left: 4px;
    top: -3px;
    width: 6px;
    height: 12px;
    border: solid #2b84dc;
    border-width: 0 2px 2px 0;
    transform: rotate(40deg);
  }
`;

const ListBlank = styled.div`
  height: 11px;
  border-bottom: 1px solid #999;
`;

const ListFoot = styled.div`
  flex: 1;
  background: #efefef;
`;

const Diagram = styled.div`
  padding: 2px 7px 0 5px;
`;

const Readout = styled.p`
  display: flex;
  gap: 8px;
  margin: 0;
  height: 18px;
  line-height: 18px;
`;

const Plot = styled.div`
  padding: 0 10px;
  border: 1px solid #808080;
  background: #e4e4e4;
`;

const PlotArea = styled.div`
  position: relative;
  height: 142px;
  padding-top: 3px;
  background: #fff;
`;

const Lane = styled.div`
  display: flex;
  height: 25px;
  padding-top: 1px;
  border-top: 1px dashed #9a9a9a;
  background: ${(p) => p.$bg || '#fff'};
`;

const LaneEnd = styled.div`
  border-top: 1px dashed #9a9a9a;
`;

const Interval = styled.div`
  position: relative;
  z-index: 1;
  display: grid;
  grid-template-columns: 7px auto 1fr auto 7px;
  align-items: center;
  gap: 3px;
  height: 22px;
  border-top: 1px solid #9c9c9c;
  border-bottom: 1px solid #777;
  background: linear-gradient(#e2e2e2, #f1f1f1 50%, #c0c0c0);
`;

const Cap = styled.span`
  display: grid;
  place-items: center;
  height: 20px;
  background: linear-gradient(#ababab, #747474);
`;

const IntervalName = styled.b`
  text-align: center;
`;

const StationLine = styled.span`
  position: absolute;
  z-index: 2;
  top: 2px;
  bottom: 1px;
  width: 2px;
  margin-left: -1px;
  background: #868686;
`;

const Axis = styled.svg`
  display: block;
  width: calc(100% - 22px);
  height: 22px;
  margin: 0 11px;
  overflow: visible;
`;

const range = (n) => Array.from({ length: n }, (_, i) => i);
const tickLabel = (v) => (v >= 1000 ? `${Math.floor(v / 1000)}'${String(v % 1000).padStart(3, '0')}` : v);

const Intervals = () => (
  <Diagram>
    <Readout>
      <span>Station: <b>498.107 m</b></span>
      <span>Value: <b>C1 Wall Typical section</b></span>
    </Readout>
    <Plot>
      <PlotArea>
        {LANES.map((lane, i) => {
          let at = 0;
          return (
            <Lane key={i} $bg={lane.bg}>
              {lane.parts.map((part) => {
                const style = { width: pct(part.to - part.from), marginLeft: pct(part.from - at) };
                at = part.to;
                return (
                  <Interval key={part.from} style={style}>
                    <Cap><StepIcon $side="right" /></Cap>
                    <span>{part.from.toFixed(3)}</span>
                    <IntervalName>{part.name}</IntervalName>
                    <span>{part.to.toFixed(3)}</span>
                    <Cap><StepIcon $side="left" /></Cap>
                  </Interval>
                );
              })}
            </Lane>
          );
        })}
        <LaneEnd />
        <Drawing>
          {range(38).map((i) => (
            <line key={i} x1={pct((i + 1) * 50)} x2={pct((i + 1) * 50)} y1="0" y2="100%" stroke="#9a9a9a" strokeDasharray="5 4" shapeRendering="crispEdges" />
          ))}
        </Drawing>
        <StationLine style={{ left: pct(STATION) }} />
      </PlotArea>
    </Plot>
    <Axis>
      {range(155).map((i) => (
        <line key={i} x1={pct(i * 12.5)} x2={pct(i * 12.5)} y1="0" y2={i % 4 ? 2 : 5} stroke="#777" shapeRendering="crispEdges" />
      ))}
      {range(39).map((i) => (
        <text key={i} x={pct(i * 50)} y="16" textAnchor="middle" fontSize="10">{tickLabel(i * 50)}</text>
      ))}
    </Axis>
  </Diagram>
);

const BottomBar = styled.div`
  display: flex;
  align-items: center;
  height: 39px;
  padding: 0 3px 0 1px;
  border-top: 1px solid #4a4a4a;
  background: ${bar};
`;

const BottomButton = styled.button`
  display: flex;
  flex-direction: column;
  align-items: center;
  width: ${(p) => p.$w}px;
  height: 38px;
  padding-top: 4px;
  line-height: 14px;
  background: ${(p) => (p.$active ? activeBlue : 'none')};
`;

/* ---------- command line and taskbar ---------- */

const CommandHead = styled.div`
  display: grid;
  grid-template-columns: 1fr auto 1fr;
  align-items: center;
  height: 23px;
  padding: 0 4px;
  background: linear-gradient(#a3a3a3, #8e8e8e);
  border-bottom: 1px solid #555;
`;

const HeadGroup = styled.div`
  display: flex;
  justify-content: ${(p) => (p.$end ? 'flex-end' : 'flex-start')};
  gap: 5px;
`;

const CommandRow = styled.form`
  display: flex;
  align-items: center;
  gap: 4px;
  height: 25px;
  padding: 0 4px 0 5px;
  background: #ececec;
`;

const CommandLabel = styled.label`
  width: 58px;
`;

const CommandInput = styled.input`
  flex: 1;
  height: 20px;
  border: 1px solid #666;
  background: #fff;
`;

const Strip = styled.div`
  display: flex;
  justify-content: center;
  align-items: flex-end;
  height: 5px;
  padding-right: 41px;
  background: #5a5a5a;
`;

const StripHandle = styled.span`
  width: 86px;
  height: 3px;
  border-top: 1px solid #9cc4e4;
  background: #3f6f94;
`;

const Taskbar = styled.footer`
  display: flex;
  height: 40px;
  background: linear-gradient(90deg, #262626, #2a2a2a 45%, #2f363b 50%, #2b2b2b 56%, #262626);
  color: #fff;
`;

const Task = styled.button`
  display: grid;
  place-items: center;
  width: ${(p) => (p.$start ? 48 : 41)}px;
  margin-right: ${(p) => (p.$start ? 6 : 8)}px;
  border-bottom: 3px solid ${(p) => (p.$open ? '#76b9ed' : 'transparent')};
`;

const Tray = styled.div`
  display: flex;
  align-items: center;
  margin-left: auto;
`;

const TrayButton = styled.button`
  display: grid;
  place-items: center;
  width: 24px;
  height: 40px;
`;

const Weather = styled.button`
  display: flex;
  align-items: center;
  gap: 9px;
  margin-right: 11px;
  font-size: 13px;
`;

const Clock = styled.div`
  width: 70px;
  margin-right: 7px;
  text-align: center;
  line-height: 18px;
`;

const Notifications = styled.button`
  display: grid;
  place-items: center;
  width: 32px;
  margin-right: 14px;
`;

const LogoMark = ({ size = 22, framed }) => (
  <Svg $size={size} viewBox="0 0 44 44" role="img" aria-label="Roads">
    {framed && <rect width="44" height="44" fill="#2f70b5" />}
    <g fill="none" stroke="#fff" strokeWidth={size > 30 ? 2 : 3} strokeLinecap="round">
      <path d="M19 11C17 22 14 32 9 40" />
      <path d="M5 22C1 14 10 5 23 5c11 0 13 7 8 12-4 4-10 5-15 5 6 2 8 12 12 16 2 2 4 1 6-2" />
      <circle cx="34" cy="31" r="5.500" />
    </g>
  </Svg>
);

const page = (color, letter, back = '#fff') => (
  <>
    <path d="M8 1l10 1v14l-10 2z" fill={back} stroke={color} />
    <path d="M13 5h4M13 8h4M13 11h4M13 14h4" stroke={color} />
    <path d="M1 4l11-2v15L1 15z" fill={color} />
    <text x="6.500" y="13" textAnchor="middle" fontSize="9" fontWeight="700" fill="#fff">{letter}</text>
  </>
);

const square = (bg, fg, text, line) => (
  <>
    <rect x=".5" y=".5" width="19" height="19" fill={bg} stroke={line || bg} strokeWidth="1.500" />
    <text x="10" y="14" textAnchor="middle" fontSize="11" fontWeight="700" fill={fg}>{text}</text>
  </>
);

const TASKS = [
  { name: 'Chrome', art: <><circle cx="10" cy="10" r="10" fill="#f7c52b" /><path d="M10 10L1.300 5A10 10 0 0 1 18.700 5z" fill="#dd4433" /><path d="M10 10L1.300 5a10 10 0 0 0 8 15L14 12z" fill="#2f9e50" /><circle cx="10" cy="10" r="4.800" fill="#fff" /><circle cx="10" cy="10" r="3.700" fill="#3f7fe6" /></> },
  { name: 'Explorer', open: true, art: <><path d="M0 2h7l2 2h11v14H0z" fill="#e9b93c" /><path d="M0 6h20v12H0z" fill="#fbdc7a" /><path d="M4 11h12v7h-3v-4H7v4H4z" fill="#3c9be0" /></> },
  { name: 'Word', art: page('#2b5bab', 'W') },
  { name: 'PowerPoint', art: page('#d3532a', 'P') },
  { name: 'Excel', open: true, art: page('#2f8a3e', 'X') },
  { name: 'Thunderbird', art: <><path d="M10 1c6 0 9 4 9 9s-4 9-9 9c-4 0-7-2-8-5l5-1z" fill="#2a6cc4" /><path d="M3 5c5-6 14-4 16 3l-9 1z" fill="#4a9af0" /><path d="M1 6l12-1 2 7-10 3z" fill="#eef2f7" stroke="#99a" strokeWidth=".5" /><path d="M1 6l8 4 4-5" fill="none" stroke="#9ab" /></> },
  { name: 'Notepad++', art: <><path d="M2 1h14v18H2z" fill="#f4f6e8" /><path d="M2 8h14v11H2z" fill="#8ad03c" /><path d="M4.500 6v9M7 10h4M9 8v4M12 10h4M14 8v4" stroke="#222" strokeWidth="1.300" /><path d="M18 2l2 1-6 10-2 1z" fill="#e8a83a" /></> },
  { name: 'Acrobat', art: <><rect width="20" height="20" fill="#f4f4f4" /><path d="M3 16c4-2 7-7 7-12 1 5 4 9 8 8-5-1-10 0-15 4z" fill="none" stroke="#d22" strokeWidth="1.500" /></> },
  { name: 'InDesign', art: <><rect width="20" height="20" fill="#6a0f38" /><text x="10" y="13" textAnchor="middle" fontSize="9" fontWeight="700" fill="#f5c6dd">ID</text></> },
  { name: 'RoboHelp', art: square('#f2fafa', '#11606c', 'Rh') },
  { name: 'D', art: <><rect width="20" height="20" fill="#d9efe0" /><text x="10" y="16" textAnchor="middle" fontSize="17" fontWeight="700" fill="#1b7a48">D</text></> },
  { name: 'Photos', art: <><rect width="20" height="19" y="1" fill="#2d8ae4" /><path d="M0 16l7-8 6 7 3-3 4 4v4H0z" fill="#0c4d92" /><circle cx="15" cy="6" r="1.700" fill="#fff" /></> },
  { name: 'Notes', art: <><path d="M8 1l9 2-2 16L2 16z" fill="#8cc9d2" /><path d="M8 1l9 2-1 7-12 4z" fill="#c9e8ed" /><path d="M2 16l13 3 3-5" fill="none" stroke="#eee" /></> },
  { name: 'Captivate', open: true, art: square('#04200f', '#25d366', 'Cp', '#25d366') },
  { name: 'Wifi', open: true, art: <><path d="M1 8c5-6 13-6 18 0M4.500 12c3-4 8-4 11 0" fill="none" stroke="#28a8ea" strokeWidth="2.800" /><circle cx="10" cy="16.500" r="2.500" fill="#28a8ea" /></> },
];

const ribbonLeft = ['|', ['folder', 'Projects', 44], '|', ['import', 'Import', 50], 'v', ['export', 'Export', 46], 'v', '|', ['bolt', 'Generate', 70], 'v'];
const ribbonMid = [['plan', 'Planimetry', 62], ['profile', 'Profile', 48], ['sections', 'Sections', 49], ['sheets', 'Sheets', 48]];
const ribbonRight = [['styles', 'Styles', 60], 'v', ['stack', 'Layer', 46], ['sphere', 'Materials', 58], ['filter', 'Filters', 44]];

const RibbonItems = ({ items }) =>
  items.map((item, i) => {
    if (item === '|') return <RibbonLine key={i} />;
    if (item === 'v') return <RibbonCaret key={i} aria-label="More"><Triangle $color="#fff" /></RibbonCaret>;
    return (
      <RibbonButton key={i} $w={item[2]}>
        <Icon name={item[0]} />
        {item[1]}
      </RibbonButton>
    );
  });

const TABS = [['Survey', 51], ['Model', 51], ['3D modeling', 84], ['Analysis', 59], ['Axis', 41], ['Drawing', 65], ['Annotate', 62]];

const PICKERS = [
  { name: 'Axis 0', light: 'bulbOn', lock: 'unlock' },
  { name: 'Reference points Ed...', light: 'bulbOn', lock: 'lock' },
  { name: 'CTR', light: 'bulb', lock: 'lock' },
];

const PanelButtons = () => (
  <TitleButtons>
    <TitleButton aria-label="Maximize"><Icon name="maximize" /></TitleButton>
    <TitleButton aria-label="Close"><Icon name="close" /></TitleButton>
  </TitleButtons>
);

const App = () => {
  const [tab, setTab] = useState('Drawing');
  const [station, setStation] = useState(STATION);
  const [selected, setSelected] = useState('C1 Wall Typical section');

  return (
    <Page>
      <GlobalStyle />
      <TitleBar>
        <LogoMark size={16} framed />
        SierraSoft Roads
        <WindowButtons>
          <WindowButton aria-label="Minimize">
            <Svg $size={12} viewBox="0 0 12 12"><path d="M1 6.500h10" stroke="#777" /></Svg>
          </WindowButton>
          <WindowButton aria-label="Restore">
            <Svg $size={12} viewBox="0 0 12 12"><path d="M1.500 3.500h7v7h-7zM3.500 3.500v-2h7v7h-2" fill="none" stroke="#777" /></Svg>
          </WindowButton>
          <WindowButton aria-label="Close">
            <Svg $size={12} viewBox="0 0 12 12"><path d="M1 1l10 10M11 1L1 11" stroke="#777" /></Svg>
          </WindowButton>
        </WindowButtons>
      </TitleBar>

      <Ribbon>
        <RibbonGroup>
          <LogoTile><LogoMark size={42} /></LogoTile>
          <RibbonItems items={ribbonLeft} />
        </RibbonGroup>
        <RibbonGroup><RibbonItems items={ribbonMid} /></RibbonGroup>
        <RibbonGroup $justify="flex-end"><RibbonItems items={ribbonRight} /></RibbonGroup>
      </Ribbon>

      <TabBar>
        {TABS.map(([name, w]) => (
          <Tab key={name} $w={w} $active={tab === name} onClick={() => setTab(name)}>{name}</Tab>
        ))}
      </TabBar>

      <Toolbar $start={1}>
        <Tools items={['save', 'undo', 'redo', '|']} />
        <ToolLabel $w={40}>Layer:</ToolLabel>
        <Tools items={['bulb', 'bulbs', 'lock', 'unlock', 'layers', 'v', '|']} />
        <ToolLabel $w={38}>Draw:</ToolLabel>
        <Tools
          items={['line', 'polyline', 'rect', 'arc', 'v', 'circle', 'v', 'ellipse', 'v', 'point', 'path3d', 'region', 'spline', 'v',
            'hatch', 'boundary', 'letter', 'picture', '|', 'shapes', 'v', '|', 'paper', '|']}
        />
        <ToolLabel $w={50}>Modify:</ToolLabel>
        <Tools
          items={['brush', 'move', 'copy', 'rotate', 'mirror', 'scale', 'stretch', 'trim', 'extend', 'chamfer', 'fillet', 'offset', 'v',
            'explode', 'editShape', 'vv']}
        />
        <Spacer />
        <Tools items={['|', 'propA', 'propB', 'wand', '|', 'ruler', 'v']} />
      </Toolbar>

      <Workspace>
        <Split>
          <Panel>
            <PanelTitle>
              <ViewTabs>
                <ViewTab $w={78} $active>Planimetry</ViewTab>
                <ViewTab $w={53}>Preview</ViewTab>
              </ViewTabs>
              <TitleText>Planimetry: EN - Demo 2_.sgd (Active)</TitleText>
              <PanelButtons />
            </PanelTitle>
            <View>
              <RoadDrawing />
              <Pickers>
                {PICKERS.map((p) => (
                  <Picker key={p.name}>
                    <PickerSelect aria-label={p.name}><option>{p.name}</option></PickerSelect>
                    <Icon name={p.light} size={18} />
                    <Icon name={p.lock} size={18} />
                    <CaretButton aria-label="Open"><Triangle /></CaretButton>
                  </Picker>
                ))}
              </Pickers>
            </View>
            <StatusBar $end={3}>
              <Coordinates>2330636.048 , 5083219.483 | ST: 498.107 DS: 0.933</Coordinates>
              <Line />
              <Spacer />
              <ScaleText>Scale: 500</ScaleText>
              <Tools
                items={['|', 'unlock', 'north', 'axes', 'v', '|', 'fit', '|', '*wire', 'glasses', 'cube', 'vv', '|', 'star', 'zoomPage',
                  'zoomBox', 'sweep', '|', 'swap', '*link', '|', 'layersEye', '|', 'options']}
              />
            </StatusBar>
          </Panel>

          <Panel>
            <PanelTitle>
              <span />
              <TitleText>Sections: Axis 0 (Active) - EN - Demo 2_.sgd (Active)</TitleText>
              <PanelButtons />
            </PanelTitle>
            <StationBar as="div">
              <ToolLabel as="label" htmlFor="station" $w={44}>Station:</ToolLabel>
              <StationInput id="station" value={station.toFixed(3)} readOnly />
              <Slider
                type="range"
                aria-label="Station position"
                min="0"
                max={LENGTH}
                step="0.001"
                value={station}
                onChange={(e) => setStation(Number(e.target.value))}
              />
              <StepButton aria-label="Previous"><StepIcon $side="right" /></StepButton>
              <StepButton aria-label="Next"><StepIcon $side="left" /></StepButton>
            </StationBar>
            <SectionView><SectionDrawing /></SectionView>
            <SectionStatus $end={3}>
              <StatusGroup><Line /></StatusGroup>
              <div>
                <ModeButton $active>Station</ModeButton>
                <ModeButton>Section</ModeButton>
              </div>
              <StatusGroup $end>
                <ScaleText>Scale: 100</ScaleText>
                <Tools items={['|', 'zoomPage', 'zoomBox', 'sweep', '|', '*link', '|', 'options']} />
              </StatusGroup>
            </SectionStatus>
          </Panel>
        </Split>

        <Panel>
          <PanelTitle>
            <TitleText $left>Typical sections: Axis 0 (Active) - EN - Demo 2_.sgd (Active)</TitleText>
            <span />
            <PanelButtons />
          </PanelTitle>
          <Toolbar>
            <ToolLabel $w={128}>Intervals management:</ToolLabel>
            <Tools
              items={['hillAdd', 'hillDel', 'hillSync', 'hillEdit', 'hillAuto', 'hillSave', '|', 'laneAdd', 'laneEdit', 'lane', 'laneSplit',
                'laneDel', 'laneMove', '|', 'up', 'down', '|']}
            />
            <ToolLabel $w={58}>Building:</ToolLabel>
            <TextButton><Icon name="building" size={18} />Typical sections</TextButton>
            <TextButton><Icon name="objects" size={18} />Typical objects</TextButton>
            <Spacer />
            <Tools items={['|', '*link']} />
          </Toolbar>
          <Body>
            <List>
              {GROUPS.map((g) => (
                <React.Fragment key={g.title}>
                  <GroupTitle>{g.title}</GroupTitle>
                  {g.rows.map((name) => (
                    <Row key={name} $active={selected === name} onClick={() => setSelected(name)}>
                      <Margin />
                      <Swatch />
                      <Icon name="bulb" />
                      <Icon name="unlock" />
                      <RowText>{name}</RowText>
                      <Check type="checkbox" defaultChecked />
                    </Row>
                  ))}
                </React.Fragment>
              ))}
              <ListBlank />
              <ListFoot />
            </List>
            <Intervals />
          </Body>
          <BottomBar>
            <BottomButton $w={88} $active><Icon name="section" size={16} />Typical sections</BottomButton>
            <BottomButton $w={82}><Icon name="list" size={16} />Characteristics</BottomButton>
            <BottomButton $w={90}><Icon name="percent" size={16} />Superelevations</BottomButton>
            <BottomButton $w={66}><Icon name="widening" size={16} />Widenings</BottomButton>
            <Line />
            <BottomButton $w={54} $active><Icon name="diagram" size={16} />Diagram</BottomButton>
            <BottomButton $w={52}><Icon name="table" size={16} />Data</BottomButton>
            <Spacer />
            <BottomButton $w={46}><Icon name="options" size={16} />Options</BottomButton>
          </BottomBar>
        </Panel>
      </Workspace>

      <CommandHead>
        <HeadGroup><Icon name="plus" size={16} /></HeadGroup>
        <Icon name="record" />
        <HeadGroup $end><Icon name="console" size={18} /><Icon name="expand" size={16} /></HeadGroup>
      </CommandHead>
      <CommandRow>
        <CommandLabel htmlFor="command">Command:</CommandLabel>
        <CommandInput id="command" />
        <Icon name="history" size={18} />
      </CommandRow>
      <Strip><StripHandle /></Strip>

      <Taskbar>
        <Task $start aria-label="Start">
          <Svg $size={16} viewBox="0 0 16 16"><path d="M0 2.300l7-1v6.200H0zM8 1.200L16 0v7.500H8zM0 8.500h7v6.200l-7-1zM8 8.500h8V16l-8-1.200z" fill="#fff" /></Svg>
        </Task>
        {TASKS.map((t) => (
          <Task key={t.name} $open={t.open} aria-label={t.name}>
            <Svg $size={22} viewBox="0 0 20 20">{t.art}</Svg>
          </Task>
        ))}
        <Task $open aria-label="Roads"><LogoMark size={24} framed /></Task>
        <Tray>
          <Weather>
            <Svg $size={22} viewBox="0 0 22 22">
              <circle cx="15" cy="6" r="5.500" fill="#f5b31c" />
              <path d="M5 18a5 5 0 0 1 0-9c1-5 9-5 10 0a4.500 4.500 0 0 1 1 9z" fill="#dfe9f5" />
              <circle cx="18" cy="18" r="3.500" fill="#d0202e" />
            </Svg>
            <span>23°C</span>
            <span>Preval. nuvol.</span>
          </Weather>
          <TrayButton aria-label="Show hidden"><Svg $size={16} viewBox="0 0 16 16"><path d="M3 10l5-5 5 5" fill="none" stroke="#fff" strokeWidth="1.300" /></Svg></TrayButton>
          <TrayButton aria-label="Camera"><Svg $size={16} viewBox="0 0 16 16"><path d="M4.500 5.500h6v6h-6zM10.500 7l3-1.500v6l-3-1.500M4 3.500C6 1 9 1 11 3.500M4 13.500c2 2.500 5 2.500 7 0" fill="none" stroke="#fff" /></Svg></TrayButton>
          <TrayButton aria-label="Network"><Svg $size={16} viewBox="0 0 16 16"><path d="M5 3.500h10.500v8H3.500V7M7 14.500h7M10 11.500v3M.5 1.500h4v4h-4z" fill="none" stroke="#fff" strokeWidth="1.200" /></Svg></TrayButton>
          <TrayButton aria-label="Volume"><Svg $size={16} viewBox="0 0 16 16"><path d="M1 6h2l4-4v12l-4-4H1zM10 6l4 4M14 6l-4 4" fill="none" stroke="#fff" strokeWidth="1.200" /></Svg></TrayButton>
          <TrayButton aria-label="Sync"><Svg $size={16} viewBox="0 0 16 16"><path d="M1.500 3.500h9l4-2v9M1.500 3.500v11h8M5 9a3 3 0 0 1 5-2M10 9a3 3 0 0 1-5 2" fill="none" stroke="#fff" /><circle cx="12.500" cy="12.500" r="3.500" fill="#2f7fd0" /></Svg></TrayButton>
          <Clock>11:24<br />02/08/2022</Clock>
          <Notifications aria-label="Notifications">
            <Svg $size={28} viewBox="0 0 28 28">
              <path d="M3 4h17v13h-9l-4 4v-4H3z" fill="#fff" />
              <path d="M6 8h11M6 11h11M6 14h7" stroke="#333" />
              <circle cx="20" cy="20" r="7" fill="#2c2c2c" stroke="#aaa" />
              <text x="20" y="24" textAnchor="middle" fontSize="11" fill="#fff">3</text>
            </Svg>
          </Notifications>
        </Tray>
      </Taskbar>
    </Page>
  );
};

export default App;
